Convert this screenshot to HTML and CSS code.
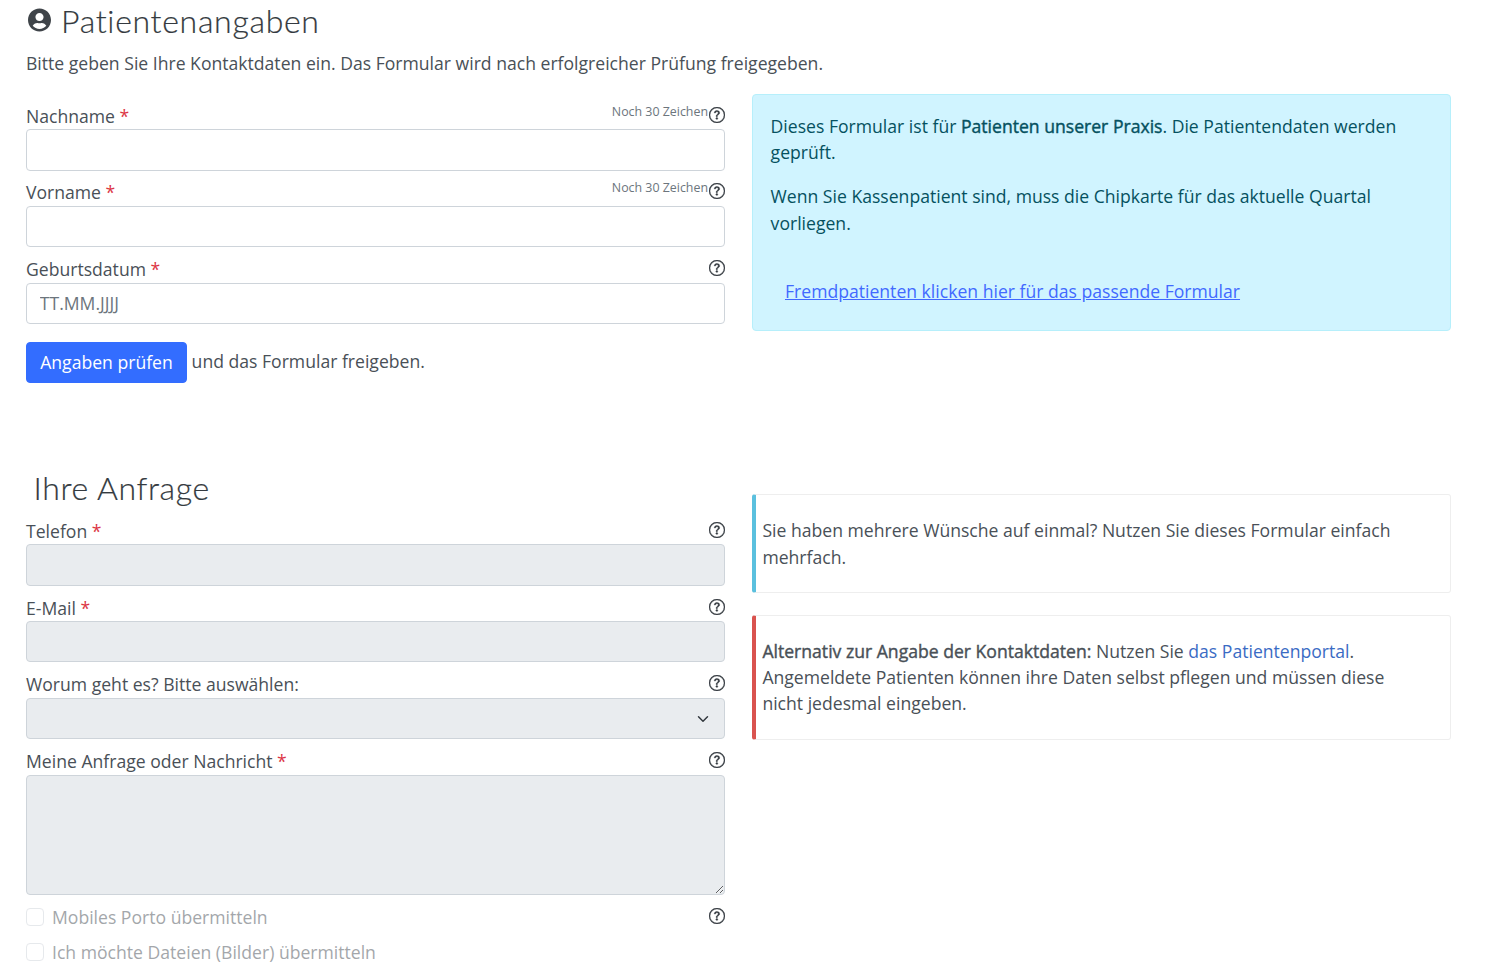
FILE: index.html
```html
<!DOCTYPE html>
<html lang="de">
<head>
<meta charset="utf-8">
<title>Patientenangaben</title>
<link rel="stylesheet" href="styles.css">
</head>
<body>
<main class="page">
  <h2 class="title">
    <svg class="user-icon" viewBox="0 0 496 512" aria-hidden="true"><path d="M248 8C111 8 0 119 0 256s111 248 248 248 248-111 248-248S385 8 248 8zm0 96c48.6 0 88 39.4 88 88s-39.4 88-88 88-88-39.4-88-88 39.4-88 88-88zm0 344c-58.7 0-111.3-26.6-146.5-68.2 18.8-35.4 55.6-59.8 98.5-59.8 2.4 0 4.8.4 7.1 1.1 13 4.2 26.6 6.9 40.9 6.9 14.3 0 28-2.7 40.9-6.9 2.3-.7 4.7-1.1 7.1-1.1 42.9 0 79.7 24.4 98.5 59.8C359.3 421.4 306.7 448 248 448z"/></svg>
    Patientenangaben
  </h2>
  <p class="intro">Bitte geben Sie Ihre Kontaktdaten ein. Das Formular wird nach erfolgreicher Prüfung freigegeben.</p>

  <section class="row row-first">
    <form class="col col-form">
      <div class="field">
        <div class="label-row"><label>Nachname <span class="req">*</span></label>
          <span class="hint"><small>Noch 30 Zeichen</small><svg class="help" viewBox="0 0 16 16"><use href="#q"/></svg></span></div>
        <input class="control" type="text">
      </div>
      <div class="field">
        <div class="label-row"><label>Vorname <span class="req">*</span></label>
          <span class="hint"><small>Noch 30 Zeichen</small><svg class="help" viewBox="0 0 16 16"><use href="#q"/></svg></span></div>
        <input class="control" type="text">
      </div>
      <div class="field">
        <div class="label-row"><label>Geburtsdatum <span class="req">*</span></label>
          <span class="hint"><svg class="help" viewBox="0 0 16 16"><use href="#q"/></svg></span></div>
        <input class="control" type="text" placeholder="TT.MM.JJJJ">
      </div>
      <div class="submit-row">
        <button class="btn" type="button">Angaben prüfen</button>
        <span class="submit-text">und das Formular freigeben.</span>
      </div>
    </form>
    <aside class="col">
      <div class="alert">
        <p>Dieses Formular ist für <strong>Patienten unserer Praxis</strong>. Die Patientendaten werden geprüft.</p>
        <p>Wenn Sie Kassenpatient sind, muss die Chipkarte für das aktuelle Quartal vorliegen.</p>
        <p class="alert-link"><a href="#">Fremdpatienten klicken hier für das passende Formular</a></p>
      </div>
    </aside>
  </section>

  <section class="row row-second">
    <form class="col">
      <h2 class="title title-sub">Ihre Anfrage</h2>
      <div class="field">
        <div class="label-row"><label>Telefon <span class="req">*</span></label>
          <span class="hint"><svg class="help" viewBox="0 0 16 16"><use href="#q"/></svg></span></div>
        <input class="control" type="text" disabled>
      </div>
      <div class="field">
        <div class="label-row"><label>E-Mail <span class="req">*</span></label>
          <span class="hint"><svg class="help" viewBox="0 0 16 16"><use href="#q"/></svg></span></div>
        <input class="control" type="text" disabled>
      </div>
      <div class="field">
        <div class="label-row"><label>Worum geht es? Bitte auswählen:</label>
          <span class="hint"><svg class="help" viewBox="0 0 16 16"><use href="#q"/></svg></span></div>
        <select class="control select" disabled><option></option></select>
      </div>
      <div class="field field-last">
        <div class="label-row"><label>Meine Anfrage oder Nachricht <span class="req">*</span></label>
          <span class="hint"><svg class="help" viewBox="0 0 16 16"><use href="#q"/></svg></span></div>
        <textarea class="control area" disabled></textarea>
      </div>
      <div class="check-row">
        <label class="check"><input type="checkbox" disabled><span>Mobiles Porto übermitteln</span></label>
        <svg class="help" viewBox="0 0 16 16"><use href="#q"/></svg>
      </div>
      <div class="check-row">
        <label class="check"><input type="checkbox" disabled><span>Ich möchte Dateien (Bilder) übermitteln</span></label>
      </div>
    </form>
    <aside class="col callouts">
      <div class="callout callout-info">
        <p>Sie haben mehrere Wünsche auf einmal? Nutzen Sie dieses Formular einfach mehrfach.</p>
      </div>
      <div class="callout callout-danger">
        <p><strong>Alternativ zur Angabe der Kontaktdaten:</strong> Nutzen Sie <a href="#">das Patientenportal</a>. Angemeldete Patienten können ihre Daten selbst pflegen und müssen diese nicht jedesmal eingeben.</p>
      </div>
    </aside>
  </section>
</main>
<svg class="defs" aria-hidden="true"><defs><g id="q"><path d="M8 15A7 7 0 1 1 8 1a7 7 0 0 1 0 14zm0 1A8 8 0 1 0 8 0a8 8 0 0 0 0 16z"/><path d="M5.255 5.786a.237.237 0 0 0 .241.247h.825c.138 0 .248-.113.266-.25.09-.656.54-1.134 1.342-1.134.686 0 1.314.343 1.314 1.168 0 .635-.374.927-.965 1.371-.673.489-1.206 1.06-1.168 1.987l.003.217a.25.25 0 0 0 .25.246h.811a.25.25 0 0 0 .25-.25v-.105c0-.718.273-.927 1.01-1.486.609-.463 1.244-.977 1.244-2.056 0-1.511-1.276-2.241-2.673-2.241-1.267 0-2.655.59-2.75 2.286zm1.557 5.763c0 .533.425.927 1.01.927.609 0 1.028-.394 1.028-.927 0-.552-.42-.94-1.029-.94-.584 0-1.009.388-1.009.94z"/></g></defs></svg>
</body>
</html>
```
FILE: styles.css
```css
* { box-sizing: border-box; }
html, body { margin: 0; height: 965px; overflow: hidden; background: #fff; }
body { font-family: "Open Sans", sans-serif; font-size: 17.6px; line-height: 26.4px; color: #495057; }
.defs { width: 0; height: 0; position: absolute; }
.page { padding: 0 40px 0 26px; }
.title { margin: 2px 0 0; font-family: Lato, sans-serif; font-weight: 300; font-size: 32px; letter-spacing: .7px; line-height: 38px; color: #343a40; display: flex; align-items: center; -webkit-text-stroke: .2px #343a40; }
.title-sub { margin: 0 0 10.4px 7.5px; letter-spacing: .62px; }
.user-icon { width: 23px; height: 24px; margin: -2px 10px 0 2px; fill: #3f4449; }
.intro { margin: 10px 0 0; }
strong { font-weight: 400; -webkit-text-stroke: .4px currentColor; }
.row { display: grid; grid-template-columns: 699px 699px; column-gap: 27px; align-items: start; }
.row-first { margin-top: 18px; height: 375px; }
.col-form { padding-top: 8.3px; }
.field { margin-bottom: 8.9px; }
.field-last { margin-bottom: 9.1px; }
.label-row { display: flex; justify-content: space-between; height: 26.4px; }
.req { color: #dc3545; }
.hint { display: flex; align-items: flex-start; }
.hint small { font-size: 12.4px; line-height: 18px; color: #6c757d; margin: 0 1px 0 0; }
.help { width: 16px; height: 16px; fill: #343a40; stroke: #343a40; stroke-width: .35; flex: none; margin-top: 4px; }
.control { display: block; width: 100%; height: 41.5px; padding: 6px 12.8px; border: 1px solid #ced4da; border-radius: 4px; font: inherit; color: #495057; background: #fff; opacity: 1; }
.control::placeholder { color: #6c757d; opacity: 1; }
.control:disabled { background-color: #e9ecef; opacity: 1; }
.select { appearance: none; background-image: url("data:image/svg+xml,%3csvg xmlns='http://www.w3.org/2000/svg' viewBox='0 0 16 16'%3e%3cpath fill='none' stroke='%23343a40' stroke-linecap='round' stroke-linejoin='round' stroke-width='2' d='m2 5 6 6 6-6'/%3e%3c/svg%3e"); background-repeat: no-repeat; background-position: right 13px center; background-size: 16px 12px; }
.area { height: 120px; }
.submit-row { display: flex; align-items: center; margin-top: 18px; }
.btn { height: 41px; width: 161px; padding: 0; border: 1px solid #336dff; border-radius: 4px; background: #336dff; color: #fff; font: inherit; }
.submit-text { margin-left: 4.6px; margin-top: -3px; }
.check-row { display: flex; justify-content: space-between; align-items: flex-start; height: 35.2px; }
.check { display: flex; align-items: center; gap: 8.4px; color: #495057; opacity: .5; }
.check input { appearance: none; width: 17.6px; height: 17.6px; margin: 0; border: 1px solid #ced4da; border-radius: 4px; background: #fff; }
.alert { background: #d0f4ff; border: 1px solid #b6effb; border-radius: 4px; padding: 17.6px 17.6px 0; color: #055160; height: 237px; }
.alert p { margin: 0 0 17.4px; }
.alert-link { padding: 25px 0 0 14.4px; }
a { color: #4169ff; }
.callout a { color: #3a6bc4; text-decoration: none; }
.callouts { display: flex; flex-direction: column; gap: 21.4px; padding-top: 25px; }
.callout { border: 1px solid #eee; border-left-width: 4px; border-radius: 3px; padding: 22px 40px 22px 6.4px; }
.callout p { margin: 0; }
.callout-info { border-left-color: #5bc0de; }
.callout-danger { border-left-color: #d9534f; }
```
